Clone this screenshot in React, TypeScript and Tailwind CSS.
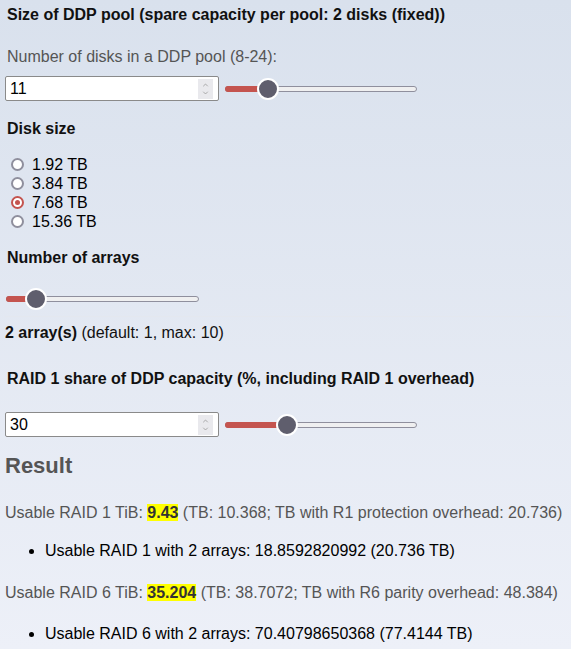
import { ChevronDown, ChevronUp } from "lucide-react"

function NumberBox({ value }: { value: string }) {
  return (
    <div className="flex items-center w-[214px] h-[25px] bg-white border border-[#8a8a8a] rounded-[2px] pl-[4px] pr-[5px]">
      <span className="flex-1 text-[16px] text-black">{value}</span>
      <div className="flex flex-col items-center justify-center w-[15px] h-[20px] bg-[#e9e9ed]">
        <ChevronUp className="w-[11px] h-[8px] text-[#8a8a8a]" strokeWidth={2} />
        <ChevronDown className="w-[11px] h-[8px] text-[#8a8a8a]" strokeWidth={2} />
      </div>
    </div>
  )
}

function Slider({ width, pos }: { width: number; pos: number }) {
  return (
    <div className="relative h-[22px]" style={{ width }}>
      <div className="absolute left-0 right-0 top-[8px] h-[6px] rounded-full bg-[#efeff0] border border-[#8f8f9d]" />
      <div className="absolute left-0 top-[8px] h-[6px] rounded-l-full bg-[#c4544f]" style={{ width: pos }} />
      <div
        className="absolute top-0 w-[22px] h-[22px] rounded-full bg-[#5f5e6d] border-[2px] border-white"
        style={{ left: pos - 11 }}
      />
    </div>
  )
}

function Radio({ label, checked }: { label: string; checked?: boolean }) {
  return (
    <div className="flex items-center h-[19px]">
      <div
        className={`ml-[11px] w-[13px] h-[13px] rounded-full border-[2px] bg-white flex items-center justify-center ${
          checked ? "border-[#c4544f]" : "border-[#8f8f9d]"
        }`}
      >
        {checked && <div className="w-[5px] h-[5px] rounded-full bg-[#c4544f]" />}
      </div>
      <span className="ml-[8px] text-[16px] text-black">{label}</span>
    </div>
  )
}

export default function App() {
  return (
    <div
      className="w-[571px] h-[649px] overflow-hidden bg-gradient-to-b from-[#d9e1ed] to-[#edf0f8] text-[#111] px-[7px]"
      style={{ fontFamily: '"Liberation Sans", Arial, sans-serif' }}
    >
      <h3 className="pt-[6px] text-[16px] font-bold leading-[18px]">
        Size of DDP pool (spare capacity per pool: 2 disks (fixed))
      </h3>
      <p className="mt-[24px] text-[16px] text-[#555] leading-[18px]">Number of disks in a DDP pool (8-24):</p>
      <div className="mt-[10px] -ml-[2px] flex items-center gap-[6px]">
        <NumberBox value="11" />
        <Slider width={192} pos={43} />
      </div>

      <h3 className="mt-[19px] text-[16px] font-bold leading-[18px]">Disk size</h3>
      <div className="mt-[17px] -ml-[7px] flex flex-col">
        <Radio label="1.92 TB" />
        <Radio label="3.84 TB" />
        <Radio label="7.68 TB" checked />
        <Radio label="15.36 TB" />
      </div>

      <h3 className="mt-[18px] text-[16px] font-bold leading-[18px]">Number of arrays</h3>
      <div className="mt-[21px] -ml-[1px]">
        <Slider width={193} pos={30} />
      </div>
      <div className="mt-[6px] -mx-[2px] border-t border-[#e4e8ef]" />
      <p className="mt-[7px] -ml-[2px] text-[16px] leading-[18px]">
        <b>2 array(s)</b> (default: 1, max: 10)
      </p>

      <h3 className="mt-[28px] text-[16px] font-bold leading-[18px]">
        RAID 1 share of DDP capacity (%, including RAID 1 overhead)
      </h3>
      <div className="mt-[24px] -ml-[2px] flex items-center gap-[6px]">
        <NumberBox value="30" />
        <Slider width={192} pos={62} />
      </div>

      <h2 className="mt-[17px] -ml-[2px] text-[22px] font-bold text-[#555] leading-[24px]">Result</h2>
      <p className="mt-[26px] -ml-[2px] text-[16px] text-[#555] leading-[18px]">
        Usable RAID 1 TiB: <span className="bg-[#ffff00] font-bold text-[#333]">9.43</span> (TB: 10.368; TB with R1
        protection overhead: 20.736)
      </p>
      <ul className="mt-[20px] ml-[38px] list-disc text-[16px] text-black leading-[18px]">
        <li>Usable RAID 1 with 2 arrays: 18.8592820992 (20.736 TB)</li>
      </ul>
      <p className="mt-[24px] -ml-[2px] text-[16px] text-[#555] leading-[18px]">
        Usable RAID 6 TiB: <span className="bg-[#ffff00] font-bold text-[#333]">35.204</span> (TB: 38.7072; TB with R6
        parity overhead: 48.384)
      </p>
      <ul className="mt-[23px] ml-[38px] list-disc text-[16px] text-black leading-[18px]">
        <li>Usable RAID 6 with 2 arrays: 70.40798650368 (77.4144 TB)</li>
      </ul>
    </div>
  )
}
